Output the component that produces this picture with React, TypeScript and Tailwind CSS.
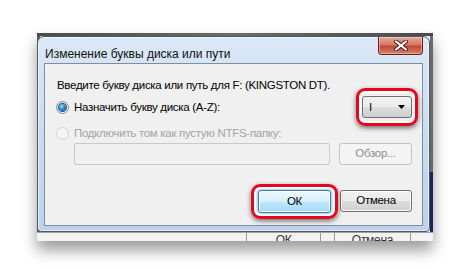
import React from "react";

const Highlight = () => (
  <div className="pointer-events-none absolute inset-0 rounded-[9px] border-[3px] border-[#e3081b] shadow-[0_2px_5px_rgba(0,0,0,0.55),inset_0_0_0_2px_#ffffff]" />
);

const Radio = ({ checked, disabled }: { checked?: boolean; disabled?: boolean }) => (
  <span
    className={`flex h-[13px] w-[13px] items-center justify-center rounded-full border ${
      disabled ? "border-[#d2d2d2] bg-[#f4f4f4]" : "border-[#8a8a8a] bg-gradient-to-br from-[#e0e0e0] to-[#ffffff]"
    }`}
  >
    {checked && (
      <span className="h-[7px] w-[7px] rounded-full bg-[radial-gradient(circle_at_40%_35%,#9fdcff_0%,#2c8fd0_45%,#0b3f73_100%)] shadow-[0_0_0_1px_#1b4f7f]" />
    )}
  </span>
);

export default function App() {
  return (
    <div className="h-[270px] w-[468px] bg-white pl-[37px] pt-[33px] font-['Liberation_Sans',Arial,sans-serif] text-[11.5px] tracking-[-0.3px] text-black">
      {/* screenshot with window behind */}
      <div className="relative flex h-[208px] w-[396px] flex-col bg-[#ececec] shadow-[0_9px_14px_rgba(0,0,0,0.4)]">
        <div className="h-[3px] bg-gradient-to-r from-[#4a4a4a] via-[#6c6c6c] to-[#4a4a4a]" />
        <div className="flex flex-1">
          <div className="w-[3px] bg-[#5a5a5a]" />
          <div className="flex-1" />
          <div className="flex w-[3px] flex-col">
            <div className="flex-1 bg-[#6a6a6a]" />
            <div className="h-[60px] bg-[#1a2560]" />
          </div>
        </div>
        <div className="flex h-[9px] items-start overflow-hidden border-t border-[#a0a0a0] bg-[#f3f3f3] text-[12px] leading-[12px] text-[#333]">
          <div className="h-full w-[210px] border-r border-[#9a9a9a]" />
          <div className="w-[73px] pt-[1px] text-center">ОК</div>
          <div className="h-full w-[15px] border-x border-[#9a9a9a]" />
          <div className="w-[75px] pt-[1px] text-center">Отмена</div>
          <div className="h-full flex-1 border-l border-[#9a9a9a]" />
        </div>

        {/* front dialog */}
        <div className="absolute left-0 top-[3px] flex h-[196px] w-[393px] flex-col rounded-t-[7px] rounded-b-[4px] border border-[#4d5866] bg-gradient-to-b from-[#dbe8f6] via-[#c9dcf1] to-[#bcd3eb] px-[6px] pb-[5px] shadow-[inset_0_0_0_1px_rgba(255,255,255,0.6)]">
          <div className="flex h-[26px] items-start">
            <div className="pl-[1px] pt-[9px] text-[12px] leading-[16px] tracking-[0px] text-[#111]">Изменение буквы диска или пути</div>
            <div className="ml-auto flex h-[18px] w-[45px] items-center justify-center rounded-b-[4px] border border-t-0 border-[#6b2119] bg-[linear-gradient(#e8aa9a_0%,#d67560_45%,#c14a35_55%,#d8806a_100%)] shadow-[inset_0_0_0_1px_rgba(255,255,255,0.35)]">
              <svg width="14" height="11" viewBox="0 0 14 11">
                <path d="M2 1.5 L12 9.5 M12 1.5 L2 9.5" stroke="#3a2020" strokeWidth="4" strokeLinecap="round" />
                <path d="M2 1.5 L12 9.5 M12 1.5 L2 9.5" stroke="#ffffff" strokeWidth="2.2" strokeLinecap="round" />
              </svg>
            </div>
          </div>

          {/* client area */}
          <div className="flex flex-1 flex-col border border-[#7e8da1] bg-[#f0f0f0] pl-[11px] pr-[10px] pt-[13px]">
            <div className="ml-[1px] h-[16px] leading-[16px]">Введите букву диска или путь для F: (KINGSTON DT).</div>

            <div className="mt-[3px] flex h-[22px] items-center">
              <Radio checked />
              <span className="ml-[5px] leading-[16px]">Назначить букву диска (A-Z):</span>
              <div className="relative ml-auto">
                <div className="absolute -inset-x-[6px] -inset-y-[8px]">
                  <Highlight />
                </div>
                <div className="relative flex h-[22px] w-[50px] items-center rounded-[3px] border border-[#707070] bg-[linear-gradient(#f2f2f2_0%,#ebebeb_50%,#dddddd_51%,#cfcfcf_100%)] pl-[6px] pr-[6px]">
                  <span className="leading-[14px]">I</span>
                  <svg className="ml-auto" width="7" height="4" viewBox="0 0 7 4">
                    <path d="M0 0 H7 L3.5 4 Z" fill="#000" />
                  </svg>
                </div>
              </div>
            </div>

            <div className="mt-[7px] flex h-[16px] items-center text-[#a3a3a3]">
              <Radio disabled />
              <span className="ml-[5px] leading-[16px]">Подключить том как пустую NTFS-папку:</span>
            </div>

            <div className="mt-[2px] flex h-[22px] pl-[18px]">
              <div className="w-[256px] rounded-[2px] border border-[#c9c9c9] bg-[#f0f0f0]" />
              <div className="ml-[9px] flex w-[73px] items-center justify-center rounded-[3px] border border-[#c2c2c2] bg-[#f4f4f4] text-[#8f8f8f]">
                Обзор...
              </div>
            </div>

            <div className="mt-[25px] flex h-[23px] justify-end">
              <div className="relative">
                <div className="absolute -inset-x-[7px] -inset-y-[6px]">
                  <Highlight />
                </div>
                <div className="relative flex h-[23px] w-[73px] items-center justify-center rounded-[3px] border border-[#3c7fb1] bg-[linear-gradient(#eaf6fd_0%,#d9f0fc_50%,#bee6fd_51%,#a7d9f5_100%)] shadow-[0_0_3px_#5aaee0,inset_0_0_0_1px_#ffffff]">
                  ОК
                </div>
              </div>
              <div className="ml-[9px] flex h-[22px] w-[72px] items-center justify-center rounded-[3px] border border-[#707070] bg-[linear-gradient(#f2f2f2_0%,#ebebeb_50%,#dddddd_51%,#cfcfcf_100%)] shadow-[inset_0_0_0_1px_#fcfcfc]">
                Отмена
              </div>
            </div>
          </div>
        </div>
      </div>
    </div>
  );
}
